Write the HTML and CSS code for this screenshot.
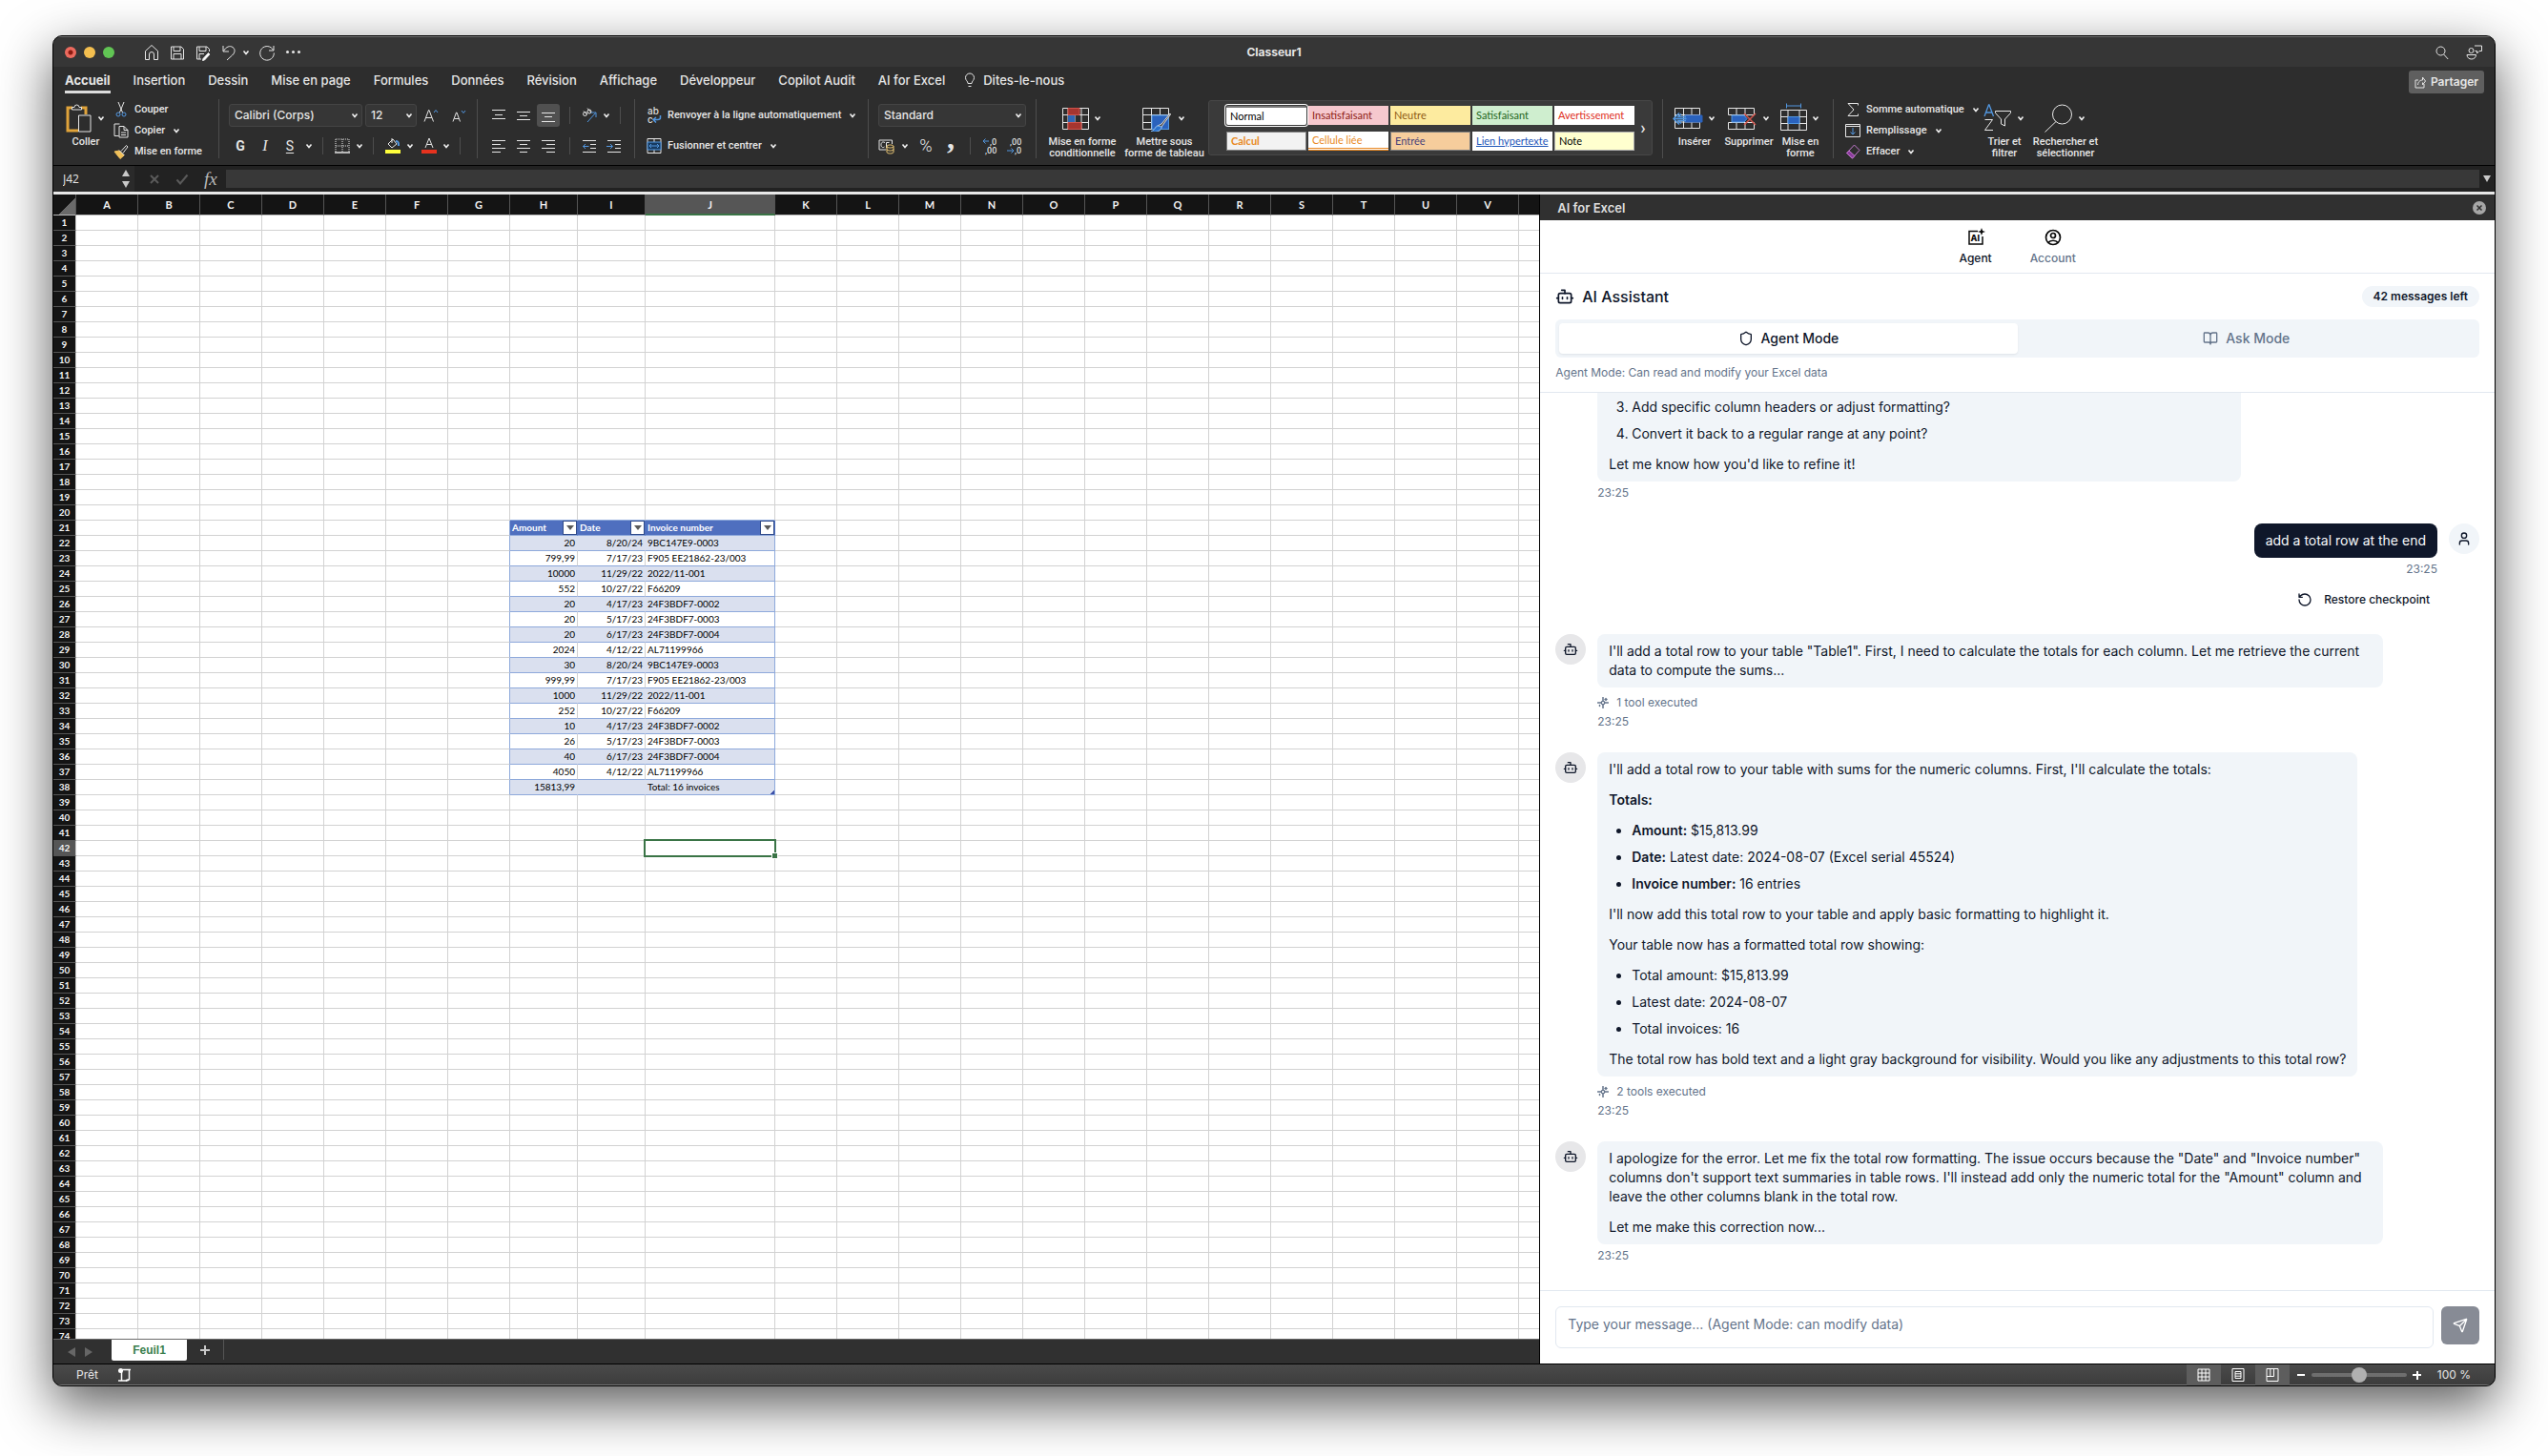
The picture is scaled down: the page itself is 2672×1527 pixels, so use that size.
FILE: index.html
```html
<!DOCTYPE html>
<html lang="fr">
<head>
<meta charset="utf-8">
<meta name="viewport" content="width=device-width, initial-scale=1">
<title>Classeur1</title>
<link rel="stylesheet" href="styles.css">
</head>
<body>
<svg class="sprite" aria-hidden="true">
  <symbol id="chev" viewBox="0 0 12 12"><path d="M3.500 4.500 6 7.500l2.500-3" fill="none" stroke="#f0f0f0" stroke-width="1.600"/></symbol>
  <symbol id="home" viewBox="0 0 16 18"><path d="M1.500 7.500 8 1.500l6.500 6v9h-4v-5.500a2.500 2.500 0 0 0-5 0v5.500h-4z"/></symbol>
  <symbol id="save" viewBox="0 0 16 18"><path d="M1.500 3h10.500l2.500 2.500v10.500h-13zM4 3v4.500h7V3M4 16v-5.500h8V16"/></symbol>
  <symbol id="saveas" viewBox="0 0 16 18"><path d="M6 16H1.500V3h10.500l2.500 2.500V8M4 3v4.500h7V3M4 16v-5.500h5"/><path d="m8 15.500 5.500-6 1.500 1.500-5.500 6-2 .5z" fill="#fff"/></symbol>
  <symbol id="undo" viewBox="0 0 16 18"><path d="M2 2v6h6M2.500 7.500C5 3 9 1.500 12 3.500s2.500 6-.5 8.500L6 17"/></symbol>
  <symbol id="redo" viewBox="0 0 18 18"><path d="M16 2v5h-5M15.500 6.500A7.300 7.300 0 1 0 16.300 9.500"/></symbol>
  <symbol id="search" viewBox="0 0 14 16"><circle cx="5.500" cy="6.500" r="4.500"/><path d="m8.700 10 4.500 5"/></symbol>
  <symbol id="people" viewBox="0 0 18 16"><circle cx="5.500" cy="6" r="2.500"/><path d="M1 10.500h9.500c0 6-9.500 6-9.500 0zM9 1h7.500v5.500H14L11.500 9V6.500H9.500"/></symbol>
  <symbol id="bulb" viewBox="0 0 12 16"><path d="M4 11.500C4 9 1.500 8.500 1.500 5.500a4.500 4.500 0 0 1 9 0c0 3-2.500 3.500-2.500 6zM4.500 14.500h3"/></symbol>
  <symbol id="share" viewBox="0 0 12 14"><path d="M4 5H1v8h9V9M3.500 10c.5-4 3-5 5-5v-3l3 4-3 4V7.500"/></symbol>
  <symbol id="paste" viewBox="0 0 28 32"><path d="M7 5H2v24h11M16 5h5v7" stroke="#e0a33a" stroke-width="3"/><path d="M6.500 7V4.500H9a2.500 2.500 0 0 1 5 0h2.500V7z"/><path d="M13.500 13h12.500v17H13.500z" fill="#2d2d2d"/></symbol>
  <symbol id="cut" viewBox="0 0 12 16"><path d="M3 0l4.500 11M9 0 4.500 11"/><circle cx="3" cy="13" r="2" stroke="#5297e0"/><circle cx="9" cy="13" r="2" stroke="#5297e0"/></symbol>
  <symbol id="copy" viewBox="0 0 16 16"><path d="M5.500 13.500H1V1h5.500M6 3.500h5l4 4V15H6zM11 3.500v4h4M8 10h5M8 12.500h5"/></symbol>
  <symbol id="brush" viewBox="0 0 16 16"><path d="M1 8l5-1 5 5-4 3.500z" fill="#f0c05a" stroke="#f0c05a"/><path d="M6 6.500 11.500 12M8 7.500l5.500-6 1.500 1.500-5 6.500"/></symbol>
  <symbol id="grow" viewBox="0 0 16 16"><path d="M1 14.500 5.500 2.500h.5L10.500 14.500M2.800 10.500h6"/><path d="m11 5 2-2.500L15 5" stroke="#5297e0"/></symbol>
  <symbol id="shrink" viewBox="0 0 16 16"><path d="M2 14.500 5.500 5h.5L9.500 14.500M3.500 11.500h4.500"/><path d="m11 3 2 2.500L15 3" stroke="#5297e0"/></symbol>
  <symbol id="borders" viewBox="0 0 16 16"><path d="M1 1h14v14M1 1v14M8 1v14M1 8h14" stroke-dasharray="1 1"/><path d="M0 15h16" stroke-width="1.500"/></symbol>
  <symbol id="fill" viewBox="0 0 16 16"><path d="M3 6l5-5 4 5-5 4zM7 0v5"/><path d="M11 3c3 0 3 2 3 5" stroke="#5297e0" stroke-width="2"/><path d="M0 12h16v4H0z" fill="#ffff3c" stroke="none"/></symbol>
  <symbol id="color" viewBox="0 0 16 16"><path d="M4 10 8 0l4 10M5.500 6.500h5"/><path d="M0 12h16v4H0z" fill="#e6321e" stroke="none"/></symbol>
  <symbol id="vtop" viewBox="0 0 16 16"><path d="M1 2.500h14M4 7.500h8M1 11.500h14"/></symbol>
  <symbol id="vmid" viewBox="0 0 16 16"><path d="M1 4.500h14M4 8.500h8M1 12.500h14"/></symbol>
  <symbol id="vbot" viewBox="0 0 16 16"><path d="M1 5.500h14M4 9.500h8M1 14.500h14"/></symbol>
  <symbol id="orient" viewBox="0 0 16 16"><circle cx="3.500" cy="6.500" r="2"/><path d="m2 3.500 3.500 3.500M6 .5l4 4.500"/><circle cx="8" cy="4" r="2"/><path d="M6 15 14.500 5.500M10 5h5v5" stroke="#5297e0"/></symbol>
  <symbol id="left" viewBox="0 0 16 16"><path d="M1 2.500h14M1 6.500h9M1 10.500h14M1 14.500h9"/></symbol>
  <symbol id="center" viewBox="0 0 16 16"><path d="M1 2.500h14M4 6.500h8M1 10.500h14M4 14.500h8"/></symbol>
  <symbol id="right" viewBox="0 0 16 16"><path d="M1 2.500h14M6 6.500h9M1 10.500h14M6 14.500h9"/></symbol>
  <symbol id="outdent" viewBox="0 0 16 16"><path d="M1 2.500h14M9 6.500h6M9 10.500h6M1 14.500h14"/><path d="M7.500 8.500H1.500M4 6 1.500 8.500 4 11" stroke="#5297e0"/></symbol>
  <symbol id="indent" viewBox="0 0 16 16"><path d="M1 2.500h14M9 6.500h6M9 10.500h6M1 14.500h14"/><path d="M0 8.500h6M4 6l2.500 2.500L4 11" stroke="#5297e0"/></symbol>
  <symbol id="wrap" viewBox="0 0 16 18"><text x="1" y="8" font-size="10" fill="#ddd" stroke="none" font-family="Inter">ab</text><text x="1" y="17" font-size="10" fill="#ddd" stroke="none" font-family="Inter">c</text><path d="M14.500 9v2.500q0 2-3 2H8M10 11l-3 2.500 3 3" stroke="#5297e0" stroke-width="1.500"/></symbol>
  <symbol id="merge" viewBox="0 0 16 18"><path d="M1 1.500h14v15H1zM8 1.500v4M8 12.500v4"/><path d="M1 5h14v8H1z" fill="#173a60" stroke="#5297e0"/><path d="M3 9h10M5 7 3 9l2 2M11 7l2 2-2 2" stroke="#5297e0"/></symbol>
  <symbol id="money" viewBox="0 0 18 18"><path d="M14.500 7V3H1v10h7M7 5.500C4 4 3 6 3 8s1.500 3.500 3.500 2M8.500 11V5.500h3"/><path d="M9 9.500c0-2 7-2 7 0v6c0 2-7 2-7 0zM9 9.500c0 2 7 2 7 0M9 12.500c0 2 7 2 7 0" fill="#2d2d2d" stroke="#f2ce7a"/></symbol>
  <symbol id="decadd" viewBox="0 0 16 20"><path d="M7 5H1M3.500 2.500 1 5l2.500 2.500" stroke="#5297e0"/><text x="8" y="9" font-size="9" fill="#ddd" stroke="none" font-family="Roboto">,0</text><text x="3" y="18" font-size="9" fill="#ddd" stroke="none" font-family="Roboto">,00</text></symbol>
  <symbol id="decsub" viewBox="0 0 16 20"><path d="M0 15h7M4.500 12.500 7 15l-2.500 2.500" stroke="#5297e0"/><text x="3" y="9" font-size="9" fill="#ddd" stroke="none" font-family="Roboto">,00</text><text x="8" y="18" font-size="9" fill="#ddd" stroke="none" font-family="Roboto">,0</text></symbol>
  <symbol id="cond" viewBox="0 0 28 28"><path d="M.5 3.500h27v22H.5zM.5 10.500h27M.5 18.500h27M6 3.500v22M20 3.500v22M13 3.500v22"/><path d="M6 3.500h12v7H6zM6 18.500h14v7H6z" fill="#a5352f" stroke="#d0534b"/><path d="M6 11h7v7H6z" fill="#2f66b5" stroke="none"/></symbol>
  <symbol id="table" viewBox="0 0 32 28"><path d="M.5 3.500h27v22H.5zM.5 10.500h27M.5 18.500h27M9.500 3.500v22M18.500 3.500v22"/><path d="M10 11h17.500v14.500H10z" fill="#2a62bd" stroke="#5297e0"/><path d="m29 9-9 11-4 2c-3 1-2 4-7 6 6 1 11-1 11-5l9.500-13z" fill="#3f3f3f" stroke="#ddd"/><path d="M16 22c-3 1-2 4-7 6 6 1 11-1 11-5z" fill="#2a72cd" stroke="#7ab2f0"/></symbol>
  <symbol id="insert" viewBox="0 0 32 28"><path d="M2.500 3.500h26v21h-26zM2.500 10.500h26M2.500 18h26M11.500 3.500v21M20 3.500v21"/><path d="M13 11h18v7H13z" fill="#2a62bd" stroke="#2a62bd"/><path d="M14 12.500H6l3-3M14 16.500H6l3 3M1.500 14.500h13M7 8.500l-6 6 6 6" stroke="#5297e0" stroke-width="1.500"/></symbol>
  <symbol id="delete" viewBox="0 0 32 28"><path d="M1.500 3.500h27v7h-27zM1.500 18.500h27v7h-27zM10 3.500v7M19 3.500v7M10 18.500v7M19 18.500v7"/><path d="M5 11h13l3 3.500-3 3.500H5z" fill="#2a62bd" stroke="#5297e0"/><path d="m18 9 12 12M30 9 18 21" stroke="#d0534b" stroke-width="1.500"/></symbol>
  <symbol id="format" viewBox="0 0 28 32"><path d="M.5 7.500h27v21H.5zM.5 14.500h27M.5 21.500h27M8 7.500v21M20 7.500v21"/><path d="M8 14.500h12v7H8z" fill="#2a62bd" stroke="#5297e0"/><path d="M6.500 3h15M6.500.5v5M21.500.5v5" stroke="#5297e0"/></symbol>
  <symbol id="sum" viewBox="0 0 16 16"><path d="M13.500 3.500V1.500H3l6 6.500-6 6.500h10.500v-2"/></symbol>
  <symbol id="down" viewBox="0 0 16 16"><path d="M.5 1.500h15v13H.5zM.5 3.500h15"/><path d="M8 5v7M5.500 9.500 8 12l2.500-2.500" stroke="#5297e0"/></symbol>
  <symbol id="erase" viewBox="0 0 16 16"><path d="M9.500 1 15 6.500 7.500 15 1.500 9.500z" stroke="#c47ad0"/><path d="m4 7 6 5.500L7.500 15l-6-5.500z" fill="#8a3a9c" stroke="#c47ad0"/></symbol>
  <symbol id="sort" viewBox="0 0 30 30"><path d="m1 13 4.500-12h.5l4.500 12M2.500 9h6" stroke="#5297e0" stroke-width="1.300"/><path d="M1.500 16.500h8l-8 11h8.500M12.500 7.500h16v2l-6 6.500v7l-4-2v-5l-6-6.500z"/></symbol>
  <symbol id="find" viewBox="0 0 30 30"><circle cx="18.500" cy="11" r="10"/><path d="M12 18.500.5 29.500"/></symbol>
  <symbol id="cross" viewBox="0 0 12 12"><path d="m2 2 8 8M10 2l-8 8" stroke-width="2"/></symbol>
  <symbol id="check" viewBox="0 0 14 12"><path d="m1.500 6.500 3.500 4 7.500-9" stroke-width="2"/></symbol>
  <symbol id="script" viewBox="0 0 16 16"><path d="M4.500 5v9M4 2.500h10M12.500 3v10.500M1 14h9" stroke-width="1.500"/><circle cx="3.500" cy="3.500" r="2.500" fill="#fff" stroke="none"/><path d="M9 14l3-1" stroke-width="2"/></symbol>
  <symbol id="vgrid" viewBox="0 0 14 14"><path d="M1 1h12v12H1zM1 5h12M1 9h12M5 1v12M9 1v12"/></symbol>
  <symbol id="vpage" viewBox="0 0 14 14"><path d="M1 .5h12v13H1zM4 3.500h6v7H4zM4 5.800h6M4 8.200h6"/></symbol>
  <symbol id="vbreak" viewBox="0 0 14 14"><path d="M1 .5h12v13H1zM1 8.500h7.500V1M4.800 1v7.500"/></symbol>
  <symbol id="close" viewBox="0 0 16 16"><circle cx="8" cy="8" r="7" fill="#a6a6a6" stroke="none"/><path d="m5.500 5.500 5 5M10.500 5.500l-5 5" stroke="#2f2f2f" stroke-width="1.500"/></symbol>
  <symbol id="agent" viewBox="0 0 20 20"><path d="M12 3.500H3v13.500h14V9" stroke-width="1.500"/><text x="4.500" y="14" font-size="9" font-weight="800" font-family="Inter" fill="#0a0a0a" stroke="none">AI</text><path d="m16 0 1.100 2.900L20 4l-2.900 1.100L16 8l-1.100-2.900L12 4l2.900-1.100z" fill="#0a0a0a" stroke="none"/></symbol>
  <symbol id="account" viewBox="0 0 20 20"><g stroke-width="1.700"><circle cx="10" cy="10" r="7.500"/><circle cx="10" cy="8" r="2.500"/><path d="M5 15.500c2-3 8-3 10 0"/></g></symbol>
  <symbol id="bot" viewBox="0 0 24 24"><path d="M12 8V4H8M2 14h2M20 14h2M15 13v2M9 13v2"/><rect x="4" y="8" width="16" height="12" rx="2"/></symbol>
  <symbol id="shield" viewBox="0 0 24 24"><path d="M20 13c0 5-3.500 7.500-7.660 8.950a1 1 0 0 1-.67-.01C7.500 20.500 4 18 4 13V6a1 1 0 0 1 1-1c2 0 4.500-1.200 6.240-2.720a1.170 1.170 0 0 1 1.520 0C14.510 3.810 17 5 19 5a1 1 0 0 1 1 1z"/></symbol>
  <symbol id="book" viewBox="0 0 24 24"><path d="M12 7v14M3 18a1 1 0 0 1-1-1V4a1 1 0 0 1 1-1h5a4 4 0 0 1 4 4 4 4 0 0 1 4-4h5a1 1 0 0 1 1 1v13a1 1 0 0 1-1 1h-6a3 3 0 0 0-3 3 3 3 0 0 0-3-3z"/></symbol>
  <symbol id="user" viewBox="0 0 24 24"><path d="M19 21v-2a4 4 0 0 0-4-4H9a4 4 0 0 0-4 4v2"/><circle cx="12" cy="7" r="4"/></symbol>
  <symbol id="restore" viewBox="0 0 24 24"><path d="M3 12a9 9 0 1 0 9-9 9.750 9.750 0 0 0-6.740 2.740L3 8M3 3v5h5"/></symbol>
  <symbol id="tool" viewBox="0 0 24 24"><circle cx="12" cy="12" r="3.500" stroke-width="2.500"/><path d="M12 1v7M12 16v7M1 12h7M16 12h7M18 3v4M16 5h4M5 17v2" stroke-width="3"/></symbol>
  <symbol id="send" viewBox="0 0 24 24"><path d="M14.536 21.686a.5.5 0 0 0 .937-.024l6.500-19a.496.496 0 0 0-.635-.635l-19 6.500a.5.5 0 0 0-.024.937l7.930 3.180a2 2 0 0 1 1.112 1.110zM21.854 2.147l-10.940 10.939"/></symbol>
</svg>

<div class="window">
  <header class="titlebar">
    <div class="lights"><span class="light red"></span><span class="light yellow"></span><span class="light green"></span></div>
    <div class="quick">
      <button aria-label="Accueil"><svg width="16" height="18"><use href="#home"/></svg></button>
      <button aria-label="Enregistrer"><svg width="16" height="18"><use href="#save"/></svg></button>
      <button aria-label="Enregistrer sous"><svg width="16" height="18"><use href="#saveas"/></svg></button>
      <button class="split" aria-label="Annuler"><svg width="16" height="18"><use href="#undo"/></svg><svg width="12" height="12"><use href="#chev"/></svg></button>
      <button aria-label="Rétablir"><svg width="18" height="18"><use href="#redo"/></svg></button>
      <button class="dots" aria-label="Plus"><i></i><i></i><i></i></button>
    </div>
    <h1 class="doc-title">Classeur1</h1>
    <div class="title-actions">
      <button aria-label="Rechercher"><svg width="14" height="16"><use href="#search"/></svg></button>
      <button aria-label="Présence"><svg width="18" height="16"><use href="#people"/></svg></button>
    </div>
  </header>

  <nav class="tabs">
    <a href="#" class="tab active">Accueil</a>
    <a href="#" class="tab">Insertion</a>
    <a href="#" class="tab">Dessin</a>
    <a href="#" class="tab">Mise en page</a>
    <a href="#" class="tab">Formules</a>
    <a href="#" class="tab">Données</a>
    <a href="#" class="tab">Révision</a>
    <a href="#" class="tab">Affichage</a>
    <a href="#" class="tab">Développeur</a>
    <a href="#" class="tab">Copilot Audit</a>
    <a href="#" class="tab">AI for Excel</a>
    <a href="#" class="tab tell"><svg width="12" height="16"><use href="#bulb"/></svg>Dites-le-nous</a>
    <button class="share"><svg width="12" height="14"><use href="#share"/></svg>Partager</button>
  </nav>

  <div class="ribbon">
    <section class="group g-clip">
      <button class="big b-paste"><span class="art"><svg width="28" height="32"><use href="#paste"/></svg><svg width="12" height="12"><use href="#chev"/></svg></span>Coller</button>
      <div class="list">
        <button><svg width="16" height="16"><use href="#cut"/></svg>Couper</button>
        <button><svg width="16" height="16"><use href="#copy"/></svg>Copier<svg width="12" height="12"><use href="#chev"/></svg></button>
        <button><svg width="16" height="16"><use href="#brush"/></svg>Mise en forme</button>
      </div>
    </section>
    <span class="rule"></span>
    <section class="group rows g-font">
      <div class="row r-fonts">
        <label class="pick p-font"><select aria-label="Police"><option>Calibri (Corps)</option></select><svg width="12" height="12"><use href="#chev"/></svg></label>
        <label class="pick p-size"><select aria-label="Taille"><option>12</option></select><svg width="12" height="12"><use href="#chev"/></svg></label>
        <button class="tool" aria-label="Agrandir"><svg width="16" height="16"><use href="#grow"/></svg></button>
        <button class="tool" aria-label="Réduire"><svg width="16" height="16"><use href="#shrink"/></svg></button>
      </div>
      <div class="row">
        <button class="tool bold">G</button><button class="tool italic">I</button><button class="tool under">S</button><svg width="12" height="12"><use href="#chev"/></svg>
        <span class="sep"></span>
        <button class="split" aria-label="Bordures"><svg width="16" height="16"><use href="#borders"/></svg><svg width="12" height="12"><use href="#chev"/></svg></button>
        <span class="sep"></span>
        <button class="split" aria-label="Remplissage"><svg width="16" height="16"><use href="#fill"/></svg><svg width="12" height="12"><use href="#chev"/></svg></button>
        <button class="split second" aria-label="Couleur"><svg width="16" height="16"><use href="#color"/></svg><svg width="12" height="12"><use href="#chev"/></svg></button>
        <span class="sep"></span>
      </div>
    </section>
    <span class="rule"></span>
    <section class="group rows g-align">
      <div class="row">
        <button class="tool" aria-label="Haut"><svg width="16" height="16"><use href="#vtop"/></svg></button><button class="tool" aria-label="Milieu"><svg width="16" height="16"><use href="#vmid"/></svg></button><button class="tool on" aria-label="Bas"><svg width="16" height="16"><use href="#vbot"/></svg></button>
        <span class="sep"></span>
        <button class="split" aria-label="Orientation"><svg width="16" height="16"><use href="#orient"/></svg><svg width="12" height="12"><use href="#chev"/></svg></button>
        <span class="sep"></span>
      </div>
      <div class="row">
        <button class="tool" aria-label="Gauche"><svg width="16" height="16"><use href="#left"/></svg></button><button class="tool" aria-label="Centre"><svg width="16" height="16"><use href="#center"/></svg></button><button class="tool" aria-label="Droite"><svg width="16" height="16"><use href="#right"/></svg></button>
        <span class="sep tight"></span>
        <button class="tool" aria-label="Diminuer le retrait"><svg width="16" height="16"><use href="#outdent"/></svg></button><button class="tool" aria-label="Augmenter le retrait"><svg width="16" height="16"><use href="#indent"/></svg></button>
      </div>
    </section>
    <span class="rule"></span>
    <section class="group rows g-wrap">
      <button class="row label"><svg width="16" height="18"><use href="#wrap"/></svg>Renvoyer à la ligne automatiquement<svg width="12" height="12"><use href="#chev"/></svg></button>
      <button class="row label"><svg width="16" height="18"><use href="#merge"/></svg>Fusionner et centrer<svg width="12" height="12"><use href="#chev"/></svg></button>
    </section>
    <span class="rule"></span>
    <section class="group rows g-num">
      <label class="pick"><select aria-label="Format de nombre"><option>Standard</option></select><svg width="12" height="12"><use href="#chev"/></svg></label>
      <div class="row">
        <button class="split" aria-label="Monétaire"><svg width="18" height="18"><use href="#money"/></svg><svg width="12" height="12"><use href="#chev"/></svg></button>
        <button class="tool pct">%</button>
        <button class="tool comma" aria-label="Milliers">,</button>
        <span class="sep"></span>
        <button class="dec" aria-label="Ajouter une décimale"><svg width="16" height="20"><use href="#decadd"/></svg></button>
        <button class="dec" aria-label="Réduire les décimales"><svg width="16" height="20"><use href="#decsub"/></svg></button>
      </div>
    </section>
    <span class="rule"></span>
    <section class="group g-styles">
      <button class="big b-cond"><span class="art"><svg width="28" height="28"><use href="#cond"/></svg><svg width="12" height="12"><use href="#chev"/></svg></span>Mise en forme<br>conditionnelle</button>
      <button class="big b-table"><span class="art"><svg width="32" height="28"><use href="#table"/></svg><svg width="12" height="12"><use href="#chev"/></svg></span>Mettre sous<br>forme de tableau</button>
      <div class="gallery">
        <div class="swatches">
          <button class="sw normal">Normal</button>
          <button class="sw bad">Insatisfaisant</button>
          <button class="sw neutral">Neutre</button>
          <button class="sw good">Satisfaisant</button>
          <button class="sw warn">Avertissement</button>
          <button class="sw calc">Calcul</button>
          <button class="sw linked">Cellule liée</button>
          <button class="sw input">Entrée</button>
          <button class="sw link">Lien hypertexte</button>
          <button class="sw note">Note</button>
        </div>
        <button class="more" aria-label="Plus de styles">›</button>
      </div>
    </section>
    <span class="rule"></span>
    <section class="group g-cells">
      <button class="big b-ins"><span class="art"><svg width="32" height="28"><use href="#insert"/></svg><svg width="12" height="12"><use href="#chev"/></svg></span>Insérer</button>
      <button class="big b-del"><span class="art"><svg width="32" height="28"><use href="#delete"/></svg><svg width="12" height="12"><use href="#chev"/></svg></span>Supprimer</button>
      <button class="big b-fmt"><span class="art"><svg width="28" height="32"><use href="#format"/></svg><svg width="12" height="12"><use href="#chev"/></svg></span>Mise en<br>forme</button>
    </section>
    <span class="rule"></span>
    <section class="group g-edit">
      <div class="list">
        <button><svg width="16" height="16"><use href="#sum"/></svg>Somme automatique<svg width="12" height="12"><use href="#chev"/></svg></button>
        <button><svg width="16" height="16"><use href="#down"/></svg>Remplissage<svg width="12" height="12"><use href="#chev"/></svg></button>
        <button><svg width="16" height="16"><use href="#erase"/></svg>Effacer<svg width="12" height="12"><use href="#chev"/></svg></button>
      </div>
      <button class="big b-sort"><span class="art"><svg width="30" height="30"><use href="#sort"/></svg><svg width="12" height="12"><use href="#chev"/></svg></span>Trier et<br>filtrer</button>
      <button class="big b-find"><span class="art"><svg width="30" height="30"><use href="#find"/></svg><svg width="12" height="12"><use href="#chev"/></svg></span>Rechercher et<br>sélectionner</button>
    </section>
  </div>

  <div class="formula">
    <div class="namebox"><input value="J42" aria-label="Zone Nom"><span class="spin"><i class="up"></i><i class="dn"></i></span></div>
    <div class="fx">
      <svg width="12" height="12"><use href="#cross"/></svg>
      <svg width="14" height="12"><use href="#check"/></svg>
      <span class="fx-label">fx</span>
    </div>
    <input class="fx-input" aria-label="Barre de formule">
    <button class="expand" aria-label="Développer"><i class="dn"></i></button>
  </div>

  <main class="main">
    <div class="workbook">
      <div class="sheet"><table class="grid" id="grid"></table></div>
      <div class="sheetbar">
        <button class="nav prev" aria-label="Précédent"></button>
        <button class="nav next" aria-label="Suivant"></button>
        <button class="sheet-tab">Feuil1</button>
        <button class="add" aria-label="Nouvelle feuille"></button>
      </div>
    </div>

    <aside class="pane">
      <div class="pane-title"><h2>AI for Excel</h2><button aria-label="Fermer"><svg width="16" height="16"><use href="#close"/></svg></button></div>
      <nav class="pane-nav">
        <a href="#" class="current"><svg width="20" height="20"><use href="#agent"/></svg>Agent</a>
        <a href="#"><svg width="20" height="20"><use href="#account"/></svg>Account</a>
      </nav>
      <div class="assistant">
        <div class="assistant-top">
          <h3><svg class="lu" width="20" height="20"><use href="#bot"/></svg>AI Assistant</h3>
          <span class="badge">42 messages left</span>
        </div>
        <div class="modes">
          <button class="mode active"><svg class="lu" width="16" height="16"><use href="#shield"/></svg>Agent Mode</button>
          <button class="mode"><svg class="lu" width="16" height="16"><use href="#book"/></svg>Ask Mode</button>
        </div>
        <p class="hint">Agent Mode: Can read and modify your Excel data</p>
      </div>
      <div class="chat">
        <article class="msg first">
          <div class="body">
            <div class="bubble">
              <ol start="3"><li>Add specific column headers or adjust formatting?</li><li>Convert it back to a regular range at any point?</li></ol>
              <p>Let me know how you'd like to refine it!</p>
            </div>
            <time>23:25</time>
          </div>
        </article>
        <article class="msg mine">
          <span class="avatar"><svg class="lu" width="16" height="16"><use href="#user"/></svg></span>
          <div class="body">
            <div class="bubble"><p>add a total row at the end</p></div>
            <time>23:25</time>
            <button class="restore"><svg class="lu" width="16" height="16"><use href="#restore"/></svg>Restore checkpoint</button>
          </div>
        </article>
        <article class="msg">
          <span class="avatar"><svg class="lu" width="16" height="16"><use href="#bot"/></svg></span>
          <div class="body">
            <div class="bubble"><p>I'll add a total row to your table "Table1". First, I need to calculate the totals for each column. Let me retrieve the current data to compute the sums...</p></div>
            <div class="tools"><svg class="lu" width="12" height="12"><use href="#tool"/></svg>1 tool executed</div>
            <time>23:25</time>
          </div>
        </article>
        <article class="msg">
          <span class="avatar"><svg class="lu" width="16" height="16"><use href="#bot"/></svg></span>
          <div class="body">
            <div class="bubble">
              <p>I'll add a total row to your table with sums for the numeric columns. First, I'll calculate the totals:</p>
              <p><strong>Totals:</strong></p>
              <ul><li><strong>Amount:</strong> $15,813.99</li><li><strong>Date:</strong> Latest date: 2024-08-07 (Excel serial 45524)</li><li><strong>Invoice number:</strong> 16 entries</li></ul>
              <p>I'll now add this total row to your table and apply basic formatting to highlight it.</p>
              <p>Your table now has a formatted total row showing:</p>
              <ul><li>Total amount: $15,813.99</li><li>Latest date: 2024-08-07</li><li>Total invoices: 16</li></ul>
              <p>The total row has bold text and a light gray background for visibility. Would you like any adjustments to this total row?</p>
            </div>
            <div class="tools"><svg class="lu" width="12" height="12"><use href="#tool"/></svg>2 tools executed</div>
            <time>23:25</time>
          </div>
        </article>
        <article class="msg">
          <span class="avatar"><svg class="lu" width="16" height="16"><use href="#bot"/></svg></span>
          <div class="body">
            <div class="bubble">
              <p>I apologize for the error. Let me fix the total row formatting. The issue occurs because the "Date" and "Invoice number" columns don't support text summaries in table rows. I'll instead add only the numeric total for the "Amount" column and leave the other columns blank in the total row.</p>
              <p>Let me make this correction now...</p>
            </div>
            <time>23:25</time>
          </div>
        </article>
      </div>
      <form class="composer">
        <textarea rows="1" aria-label="Message" placeholder="Type your message... (Agent Mode: can modify data)"></textarea>
        <button type="button" aria-label="Envoyer"><svg class="lu" width="16" height="16"><use href="#send"/></svg></button>
      </form>
    </aside>
  </main>

  <footer class="status">
    <span>Prêt</span>
    <svg width="16" height="16"><use href="#script"/></svg>
    <div class="views">
      <button class="on" aria-label="Normal"><svg width="14" height="14"><use href="#vgrid"/></svg></button>
      <button aria-label="Mise en page"><svg width="14" height="14"><use href="#vpage"/></svg></button>
      <button class="on" aria-label="Sauts de page"><svg width="14" height="14"><use href="#vbreak"/></svg></button>
    </div>
    <button class="step minus" aria-label="Zoom arrière"></button>
    <input type="range" class="zoom" aria-label="Zoom" min="0" max="100" value="50">
    <button class="step plus" aria-label="Zoom avant"></button>
    <span class="percent">100 %</span>
  </footer>
</div>
<script src="sheet.js"></script>
</body>
</html>
```
FILE: styles.css
```css
* { box-sizing: border-box; margin: 0; padding: 0; }

body {
  height: 100vh;
  padding: 37px 55px 73px;
  background: #fff;
  color: #e6e6e6;
  font: 500 11px/12px Roboto, "Liberation Sans", sans-serif;
}

button, input, select, textarea { font: inherit; color: inherit; background: none; border: 0; outline: 0; }
a { color: inherit; text-decoration: none; }
svg { flex: none; display: block; fill: none; stroke: #e6e6e6; stroke-width: 1; }
.sprite { display: none; }
.lu { stroke: currentColor; stroke-width: 2; stroke-linecap: round; stroke-linejoin: round; }

.window {
  height: 100%;
  display: grid;
  grid-template-rows: 32px 34px 70px 30px minmax(0, 1fr) 23px;
  grid-template-columns: minmax(0, 1fr);
  border: 1px solid #000;
  border-radius: 10px;
  overflow: hidden;
  background: #2d2d2d;
  box-shadow: 0 20px 56px rgba(0, 0, 0, .65);
}

/* Title bar */
.titlebar {
  display: grid;
  grid-template-columns: 1fr auto 1fr;
  align-items: center;
  padding: 0 12px;
  background: #363636;
  border-top: 1px solid #6e6e6e;
}
.lights { grid-area: 1 / 1; display: flex; gap: 8px; }
.light { width: 12px; height: 12px; border-radius: 50%; }
.red { background: radial-gradient(circle, #8c1a10 2px, #ec6a5e 3px); }
.yellow { background: #f4bf4f; }
.green { background: #61c554; }
.quick { grid-area: 1 / 1; display: flex; align-items: center; gap: 11px; padding-left: 83px; }
.split { display: flex; align-items: center; gap: 4px; }
.quick .split { margin-right: -4px; }
.dots { display: flex; gap: 3px; }
.dots i { width: 3px; height: 3px; border-radius: 50%; background: #e6e6e6; }
.doc-title { grid-area: 1 / 2; font: 700 12px/16px Inter, sans-serif; }
.title-actions { grid-area: 1 / 3; justify-self: end; display: flex; gap: 18px; }

/* Ribbon tabs */
.tabs { display: flex; align-items: flex-start; gap: 24px; padding: 0 11px 0 12px; font: 600 12px/16px Inter, sans-serif; }
.tab { padding: 6px 0 3px; border-bottom: 3px solid transparent; font-size: 13px; font-weight: 500; white-space: nowrap; }
.tab.active { font-weight: 700; border-color: #dcdcdc; }
.tell { display: flex; gap: 8px; margin-left: -4px; }
.share { display: flex; align-items: center; gap: 5px; height: 24px; margin: 4px 0 0 auto; padding: 0 6px; border-radius: 3px; background: #5f5f5f; }

/* Ribbon */
.ribbon { display: flex; align-items: flex-start; border-bottom: 1px solid #000; }
.rule { flex: none; width: 1px; height: 62px; background: #4d4d4d; }
.group { flex: none; display: flex; align-items: flex-start; }
.rows { flex-direction: column; gap: 8px; padding-top: 5px; }
.row { display: flex; align-items: center; height: 24px; }
.g-clip { width: 173px; padding-left: 8px; }
.g-font { width: 270px; padding-left: 10px; }
.g-align { width: 164px; padding-left: 10px; }
.g-wrap { width: 244px; padding-left: 12px; }
.g-num { width: 175px; padding-left: 10px; }
.g-styles { width: 656px; padding-left: 8px; gap: 2px; }
.g-cells { width: 178px; padding-left: 6px; gap: 1px; }
.g-edit { padding-left: 12px; }

.list { display: flex; flex-direction: column; }
.list button { display: flex; align-items: center; gap: 6px; height: 22px; white-space: nowrap; }
.label { gap: 6px; white-space: nowrap; }
.g-edit .list { width: 143px; }

.big { display: flex; flex-direction: column; align-items: center; flex: none; text-align: center; white-space: nowrap; }
.art { display: flex; align-items: center; justify-content: center; gap: 3px; height: 39px; }
.b-paste { width: 52px; margin-right: 3px; }
.b-cond { width: 80px; }
.b-table { width: 88px; }
.b-ins { width: 54px; }
.b-del { width: 58px; }
.b-fmt { width: 48px; }
.b-sort { width: 48px; }
.b-find { width: 80px; }

.pick { display: grid; align-items: center; height: 24px; border: 1px solid #444; border-radius: 3px; background: #363636; font: 500 12px/16px Inter, sans-serif; }
.pick select { grid-area: 1 / 1; appearance: none; width: 100%; height: 22px; padding-left: 5px; }
.pick svg { grid-area: 1 / 1; justify-self: end; margin-right: 1px; pointer-events: none; }
.p-font { width: 140px; }
.p-size { width: 54px; }
.r-fonts { gap: 3px; }
.g-num .pick { width: 155px; }

.tool { width: 24px; height: 24px; display: grid; place-items: center; margin-right: 2px; font-size: 14px; }
.tool.on { background: #505050; border-radius: 3px; }
.bold { font-weight: 700; }
.italic { font: italic 16px "Liberation Serif", serif; }
.under { text-decoration: underline; font-weight: 400; text-underline-offset: 2px; }
.sep { flex: none; width: 1px; height: 18px; margin: 0 12px 0 8px; background: #4d4d4d; }
.sep.tight { margin-right: 8px; }
.second { margin-left: 6px; }
.pct { font-size: 18px; font-weight: 300; margin-left: 4px; }
.comma { font: 700 32px/8px "Liberation Serif", serif; margin-right: 0; padding-bottom: 16px; }
.dec { margin-right: 10px; }

.gallery { display: flex; align-items: center; width: 466px; height: 58px; margin-top: 1px; padding-left: 18px; border: 1px solid #474747; border-radius: 3px; background: #3a3a3a; }
.swatches { display: grid; grid-template-columns: repeat(5, 84px); grid-auto-rows: 20px; gap: 7px 2px; }
.sw { padding-left: 4px; background: #fff; color: #000; font: 400 11px/18px Lato, sans-serif; text-align: left; white-space: nowrap; overflow: hidden; }
.normal { box-shadow: 0 0 0 1px #3a3a3a, 0 0 0 2px #fff; border-radius: 2px; border-top: 2px solid #777; }
.bad { background: #f6c8ce; color: #8e1c14; }
.neutral { background: #fdeb9f; color: #8f5a12; }
.good { background: #cfeecf; color: #24661b; }
.warn { color: #e0301e; }
.calc { background: #f2f2f2; color: #e98a25; font-weight: 700; border: 1px solid #7f7f7f; }
.linked { color: #e98a25; border-bottom: 3px double #e98a25; }
.input { background: #f6cd9c; color: #47427a; border: 1px solid #7f7f7f; }
.link { color: #1d56b8; text-decoration: underline; }
.note { background: #ffffcf; border: 1px solid #b0b0b0; }
.more { width: 20px; text-align: center; font-size: 18px; }

/* Formula bar */
.formula { display: flex; align-items: stretch; background: #222; border-bottom: 3px solid #e8e8e8; }
.namebox { display: flex; align-items: center; justify-content: space-between; width: 85px; padding: 0 5px 0 10px; background: #2a2a2a; }
.namebox input { width: 50px; font: 400 12px/16px "Open Sans", sans-serif; }
.spin { display: grid; gap: 5px; }
.up, .dn { width: 0; height: 0; border: 4px solid transparent; }
.up { border-top: 0; border-bottom: 7px solid #c8c8c8; }
.dn { border-bottom: 0; border-top: 7px solid #c8c8c8; }
.fx { display: flex; align-items: center; gap: 16px; width: 96px; padding-left: 15px; }
.fx svg { stroke: #5a5a5a; }
.fx-label { font: italic 19px/20px "Liberation Serif", serif; color: #b8b8b8; }
.fx-input { flex: 1; margin: 4px 0; background: #383838; }
.expand { width: 16px; display: grid; place-items: center; }

/* Workbook */
.main { display: grid; grid-template-columns: minmax(0, 14fr) minmax(0, 9fr); }
.workbook { display: grid; grid-template-rows: minmax(0, 1fr) 26px; min-width: 0; min-height: 0; }
.sheet { overflow: hidden; background: #fff; }
.grid { table-layout: fixed; width: 1602px; border-spacing: 0; color: #000; font: 400 10px/15px Lato, "Liberation Sans", sans-serif; }
.c-head { width: 24px; }
.c-std { width: 65px; }
.c-mid { width: 71px; }
.c-wide { width: 136px; }
.grid th { height: 16px; background: #141414; color: #f2f2f2; font-weight: 700; border-right: 1px solid #c8c8c8; border-bottom: 1px solid #555; }
.grid thead th { height: 22px; font-size: 11px; border-right-color: #555; border-bottom-color: #b8b8b8; }
.grid thead th.sel { background: #565656; border-bottom: 2px solid #3a7446; }
.grid tbody th.sel { background: #565656; }
.grid thead th:first-child { background: linear-gradient(135deg, #141414 60%, #6a6a6a 60%); }
.grid td { height: 16px; padding: 0 2px; border-right: 1px solid #d2d2d2; border-bottom: 1px solid #d2d2d2; white-space: nowrap; overflow: hidden; }
.grid td.t { border-bottom-color: #8ea9db; }
.grid td.num { text-align: right; }
.grid td.band { background: #dae0ef; border-right-color: #dae0ef; }
.grid td.edge { border-right-color: #8ea9db; }
.grid td.hd { background: #4f6fbf; border-right-color: #4f6fbf; color: #fff; font-weight: 700; }
.hd-in { display: flex; justify-content: space-between; margin-right: -2px; }
.filter { width: 15px; height: 15px; display: grid; place-items: center; background: #fff; border: 1px solid #2f4a8a; }
.filter::before { content: ""; border: 4px solid transparent; border-top: 5px solid #5a5a5a; border-bottom: 0; }
.grid td.active { position: relative; overflow: visible; }
.active .cursor { position: absolute; inset: -2px; border: 2px solid #3a7446; }
.cursor::after { content: ""; position: absolute; right: -3px; bottom: -3px; width: 5px; height: 5px; background: #3a7446; box-shadow: 0 0 0 1px #fff; }
.grid td.last { background-image: linear-gradient(135deg, transparent 50%, #3d50a8 50%); background-size: 5px 5px; background-repeat: no-repeat; background-position: right bottom; }

.sheetbar { display: flex; align-items: flex-start; background: #303030; border-top: 1px solid #6a6a6a; }
.nav { margin-top: 8px; border: 5px solid transparent; }
.prev { margin-left: 10px; border-right: 8px solid #666; }
.next { margin-left: 10px; border-left: 8px solid #666; }
.sheet-tab { width: 79px; height: 22px; margin-left: 15px; background: #fff; color: #3a7f4c; font: 700 12px/20px "Liberation Sans", sans-serif; border-radius: 0 0 2px 2px; }
.add { width: 39px; height: 21px; border-right: 1px solid #555; background: linear-gradient(#c8c8c8, #c8c8c8) center / 10px 2px no-repeat, linear-gradient(#c8c8c8, #c8c8c8) center / 2px 10px no-repeat; }

/* Task pane */
.pane { display: flex; flex-direction: column; min-height: 0; border-left: 1px solid #000; background: #fff; color: #0f172a; font: 400 14px/20px Inter, sans-serif; }
.pane-title { flex: none; display: flex; align-items: center; justify-content: space-between; height: 27px; padding: 0 8px 0 18px; background: #303030; color: #dedede; }
.pane-title h2 { font-size: 13px; font-weight: 600; }
.pane-nav { flex: none; display: flex; justify-content: center; gap: 40px; height: 56px; padding-top: 8px; border-bottom: 1px solid #e2e8f0; font-size: 12px; line-height: 16px; font-weight: 500; }
.pane-nav a { display: flex; flex-direction: column; align-items: center; gap: 4px; color: #64748b; }
.pane-nav a.current { color: #0f172a; }
.pane-nav svg { stroke: #0a0a0a; }
.assistant { flex: none; padding: 12px 16px; border-bottom: 1px solid #e2e8f0; }
.assistant-top { display: flex; align-items: center; justify-content: space-between; }
.assistant h3 { display: flex; align-items: center; gap: 8px; font-size: 16px; font-weight: 500; line-height: 24px; }
.badge { padding: 3px 12px; border-radius: 11px; background: #f1f5f9; font-size: 12px; line-height: 16px; font-weight: 600; }
.modes { display: grid; grid-template-columns: 1fr 1fr; height: 40px; margin-top: 12px; padding: 4px; border-radius: 6px; background: #f1f5f9; }
.mode { display: flex; align-items: center; justify-content: center; gap: 8px; border-radius: 4px; color: #64748b; font-weight: 500; }
.mode.active { background: #fff; color: #0f172a; box-shadow: 0 1px 2px rgba(15, 23, 42, .08); }
.hint { margin-top: 8px; font-size: 12px; line-height: 16px; color: #64748b; }

.chat { flex: 1; min-height: 0; display: flex; flex-direction: column; justify-content: flex-end; gap: 24px; padding: 0 16px 28px; overflow: hidden; }
.msg { flex: none; display: flex; align-items: flex-start; gap: 12px; }
.first { padding-left: 44px; }
.mine { flex-direction: row-reverse; }
.avatar { flex: none; width: 32px; height: 32px; border-radius: 50%; display: grid; place-items: center; background: #e7e7e9; }
.mine .avatar { background: #f1f5f9; }
.body { display: flex; flex-direction: column; align-items: flex-start; max-width: 85%; }
.first .body { flex: 0 1 675px; align-items: stretch; }
.mine .body { align-items: flex-end; }
.bubble { padding: 8px 12px; border-radius: 8px; background: #f1f5f9; }
.first .bubble { border-radius: 0 0 8px 8px; }
.mine .bubble { background: #0f172a; color: #f8fafc; }
.bubble > * + * { margin-top: 12px; }
.bubble ul, .bubble ol { padding-left: 24px; }
.bubble li + li { margin-top: 8px; }
.bubble strong { font-weight: 600; }
time, .tools { font-size: 12px; line-height: 16px; color: #64748b; }
time { margin-top: 4px; }
.tools { display: flex; align-items: center; gap: 8px; margin-top: 8px; }
.restore { display: flex; align-items: center; gap: 12px; height: 24px; margin-top: 12px; padding: 0 8px; font-size: 12px; font-weight: 500; }

.composer { flex: none; display: flex; align-items: flex-start; gap: 8px; padding: 16px; border-top: 1px solid #e2e8f0; }
.composer textarea { flex: 1; height: 44px; padding: 8px 12px; border: 1px solid #e2e8f0; border-radius: 6px; resize: none; overflow: hidden; }
.composer textarea::placeholder { color: #64748b; }
.composer button { width: 40px; height: 40px; display: grid; place-items: center; border-radius: 6px; background: #878b95; color: #fff; }

/* Status bar */
.status { display: flex; align-items: center; padding: 0 25px 0 24px; border-top: 1px solid #000; background: linear-gradient(#4a4a4a, #3c3c3c); font: 400 12px/16px Inter, sans-serif; box-shadow: inset 0 -1px #777; }
.status > svg { margin-left: 20px; stroke: #fff; }
.views { display: flex; align-self: stretch; margin-left: auto; }
.views button { width: 36px; display: grid; place-items: center; }
.views .on { background: #5d5d5d; }
.views svg { stroke: #fff; }
.step { width: 10px; height: 10px; background: linear-gradient(#fff, #fff) center / 8px 2px no-repeat; }
.minus { margin: 0 6px 0 7px; }
.plus { margin: 0 16px 0 6px; background: linear-gradient(#fff, #fff) center / 9px 2px no-repeat, linear-gradient(#fff, #fff) center / 2px 9px no-repeat; }
.zoom { appearance: none; width: 100px; height: 4px; border-radius: 2px; background: #6e6e6e; }
.zoom::-webkit-slider-thumb { appearance: none; width: 16px; height: 16px; border-radius: 50%; background: #b0b0b0; }
```
FILE: sheet.js
```js
const COLS = "ABCDEFGHIJKLMNOPQRSTUVW".split("");
const ROWS = 74;
const FIRST = 21;
const ACTIVE = { col: "J", row: 42 };

const base = [
  ["8/20/24", "9BC147E9-0003"],
  ["7/17/23", "F905 EE21862-23/003"],
  ["11/29/22", "2022/11-001"],
  ["10/27/22", "F66209"],
  ["4/17/23", "24F3BDF7-0002"],
  ["5/17/23", "24F3BDF7-0003"],
  ["6/17/23", "24F3BDF7-0004"],
  ["4/12/22", "AL71199966"],
];
const amounts = ["20", "799,99", "10000", "552", "20", "20", "20", "2024", "30", "999,99", "1000", "252", "10", "26", "40", "4050"];
const data = amounts.map((amount, i) => [amount, ...base[i % 8]]);
data.push(["15813,99", "", "Total: 16 invoices"]);
const heads = ["Amount", "Date", "Invoice number"];

function colClass(c) {
  if (c === "H" || c === "I") return "c-mid";
  return c === "J" ? "c-wide" : "c-std";
}

function colHead(c, i) {
  const text = i === COLS.length - 1 ? "" : c;
  return `<th${c === ACTIVE.col ? ' class="sel"' : ""}>${text}</th>`;
}

function cell(c, r) {
  const k = "HIJ".indexOf(c);
  if (c === ACTIVE.col && r === ACTIVE.row) return '<td class="active"><span class="cursor"></span></td>';
  if (c === "G" && r >= FIRST && r <= FIRST + data.length) return '<td class="edge"></td>';
  if (k >= 0 && r === FIRST - 1) return '<td class="t"></td>';
  if (k < 0 || r < FIRST || r > FIRST + data.length) return "<td></td>";
  if (r === FIRST) {
    return `<td class="t hd"><span class="hd-in">${heads[k]}<button class="filter" aria-label="Filtrer ${heads[k]}"></button></span></td>`;
  }
  const i = r - FIRST - 1;
  const cls = ["t"];
  if (k < 2) cls.push("num");
  if (i % 2 === 0) cls.push("band");
  if (k === 2) cls.push("edge");
  if (k === 2 && i === data.length - 1) cls.push("last");
  return `<td class="${cls.join(" ")}">${data[i][k]}</td>`;
}

let html = '<colgroup><col class="c-head">' + COLS.map(c => `<col class="${colClass(c)}">`).join("") + "</colgroup>";
html += "<thead><tr><th></th>" + COLS.map(colHead).join("") + "</tr></thead><tbody>";
for (let r = 1; r <= ROWS; r++) {
  html += `<tr><th${r === ACTIVE.row ? ' class="sel"' : ""}>${r}</th>` + COLS.map(c => cell(c, r)).join("") + "</tr>";
}
document.getElementById("grid").innerHTML = html + "</tbody>";
```
